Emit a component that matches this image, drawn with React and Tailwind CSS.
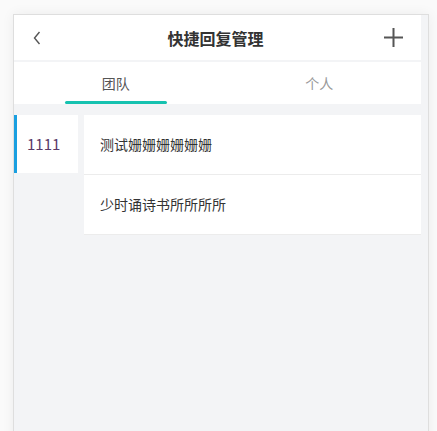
import { useState } from "react";

const groups = [{ id: 1, name: "1111" }];

const replies = [
  { id: 1, text: "测试姗姗姗姗姗姗" },
  { id: 2, text: "少时诵诗书所所所所" },
];

function App() {
  const [tab, setTab] = useState("team");
  const [active] = useState(1);

  return (
    <div className="h-[431px] overflow-hidden bg-[#fafafa] pt-[14px] pl-[13px] pr-[8px] font-['Noto_Sans_CJK_SC','Noto_Sans',sans-serif]">
      <div className="h-[430px] border border-b-0 border-[#dedede] bg-[#f3f4f6] pr-[7px] shadow-[0_0_12px_rgba(0,0,0,0.06)]">

        {/* header */}
        <div className="flex h-[45px] items-center justify-between bg-white pl-[11px] pr-[15px]">
          <button className="flex h-6 w-6 items-center justify-center">
            <svg width="10" height="14" viewBox="0 0 10 14" fill="none">
              <path d="M7.5 1 2.5 7l5 6" stroke="#555" strokeWidth="1.4" />
            </svg>
          </button>
          <h1 className="text-[16px] font-bold text-[#333]">快捷回复管理</h1>
          <button className="flex h-6 w-6 items-center justify-center">
            <svg width="19" height="19" viewBox="0 0 19 19" fill="none">
              <path d="M9.5 0v19M0 9.5h19" stroke="#555" strokeWidth="2" />
            </svg>
          </button>
        </div>

        {/* tabs */}
        <div className="mt-[2px] flex h-[42px] bg-white">
          {[
            { key: "team", label: "团队" },
            { key: "me", label: "个人" },
          ].map((t) => (
            <button
              key={t.key}
              onClick={() => setTab(t.key)}
              className="relative flex flex-1 items-center justify-center text-[14px]"
            >
              <span className={tab === t.key ? "text-[#555]" : "text-[#999]"}>
                {t.label}
              </span>
              {tab === t.key && (
                <span className="absolute bottom-0 left-1/4 h-[3px] w-1/2 rounded-full bg-[#16c2b0]" />
              )}
            </button>
          ))}
        </div>

        {/* list */}
        <div className="mt-[11px] flex gap-[6px]">
          <div className="w-[64px]">
            {groups.map((g) => (
              <div
                key={g.id}
                className={`flex h-[58px] items-center bg-white pl-[10px] text-[15px] ${
                  active === g.id ? "border-l-[3px] border-[#1a9fe0] text-[#5a3a68]" : "text-[#333]"
                }`}
              >
                {g.name}
              </div>
            ))}
          </div>

          <div className="flex-1 bg-white">
            {replies.map((r) => (
              <div
                key={r.id}
                className="flex h-[60px] items-center border-b border-[#ececec] pl-[16px] text-[14px] text-[#333]"
              >
                {r.text}
              </div>
            ))}
          </div>
        </div>

      </div>
    </div>
  );
}

export default App;
